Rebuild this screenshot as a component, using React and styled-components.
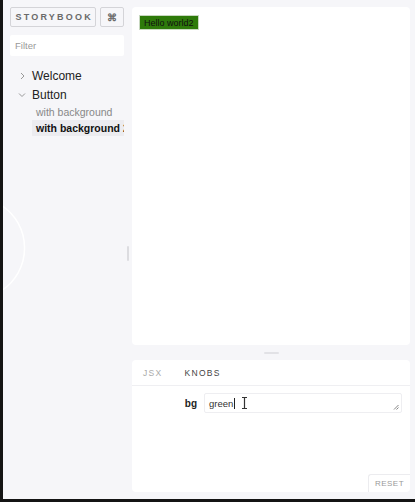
import React from 'react';
import styled, { createGlobalStyle } from 'styled-components';

const Global = createGlobalStyle`
  html, body {
    margin: 0;
    padding: 0;
    background: #111;
  }
  * { box-sizing: border-box; }
`;

// Whole window
const Page = styled.div`
  position: relative;
  width: 415px;
  height: 502px;
  display: flex;
  background: #f6f6f9;
  border-left: 3px solid #141414;
  border-bottom: 3px solid #141414;
  font-family: "Liberation Sans", Arial, sans-serif;
  overflow: hidden;
`;

const Sidebar = styled.div`
  width: 121px;
  flex-shrink: 0;
  padding: 7px 0 0 7px;
  display: flex;
  flex-direction: column;
  overflow: hidden;
`;

const Header = styled.div`
  display: flex;
  gap: 4px;
  height: 20px;
`;

const HeadButton = styled.div`
  height: 20px;
  width: ${p => p.w}px;
  border: 1px solid #d4d4d8;
  border-radius: 2px;
  display: flex;
  align-items: center;
  justify-content: center;
  color: #6a6a6a;
  font-weight: bold;
  font-size: ${p => p.fs || 9}px;
  letter-spacing: ${p => p.ls || 0}px;
  padding-left: ${p => p.ls || 0}px;
`;

const Filter = styled.div`
  margin-top: 8px;
  width: 114px;
  height: 21px;
  background: #fff;
  border-radius: 2px;
  color: #999;
  font-size: 9.5px;
  padding-left: 5px;
  display: flex;
  align-items: center;
`;

const Tree = styled.div`
  margin-top: 10px;
  display: flex;
  flex-direction: column;
`;

const Kind = styled.div`
  display: flex;
  align-items: center;
  height: 19px;
  color: #222;
  font-size: 12px;
`;

const Chevron = styled.svg`
  width: 22px;
  flex-shrink: 0;
`;

const Story = styled.div`
  height: 16px;
  margin-left: 22px;
  padding-left: 4px;
  display: flex;
  align-items: center;
  white-space: nowrap;
  font-size: 10.5px;
  color: ${p => (p.active ? '#111' : '#888')};
  font-weight: ${p => (p.active ? 'bold' : 'normal')};
  background: ${p => (p.active ? '#ececf0' : 'transparent')};
`;

const VResizer = styled.div`
  width: 8px;
  flex-shrink: 0;
  display: flex;
  align-items: center;
  justify-content: center;
  &::after {
    content: '';
    width: 2px;
    height: 15px;
    margin-top: 8px;
    background: #dcdce0;
    border-radius: 1px;
  }
`;

const Main = styled.div`
  flex: 1;
  padding: 7px 5px 7px 0;
  display: flex;
  flex-direction: column;
`;

const Preview = styled.div`
  height: 338px;
  background: #fff;
  border-radius: 4px;
  padding: 8px 7px;
`;

const HelloButton = styled.div`
  display: flex;
  width: fit-content;
  align-items: center;
  height: 15px;
  padding: 0 4px;
  background: #2e7a0a;
  border: 1px solid #c8d8c0;
  color: #111;
  font-size: 9px;
`;

const HResizer = styled.div`
  height: 15px;
  display: flex;
  align-items: center;
  justify-content: center;
  &::after {
    content: '';
    width: 15px;
    height: 2px;
    background: #e2e2e6;
    border-radius: 1px;
  }
`;

const Addons = styled.div`
  flex: 1;
  position: relative;
  background: #fff;
  border-radius: 4px;
  display: flex;
  flex-direction: column;
`;

const Tabs = styled.div`
  height: 26px;
  display: flex;
  align-items: center;
  border-bottom: 1px solid #efeff2;
  padding-left: 11px;
  gap: 22px;
`;

const Tab = styled.div`
  font-size: 8.5px;
  letter-spacing: 1.3px;
  color: ${p => (p.active ? '#444' : '#aaa')};
`;

const KnobRow = styled.div`
  margin-top: 7px;
  display: flex;
  align-items: center;
  padding-left: 52px;
  padding-right: 8px;
  gap: 7px;
`;

const KnobLabel = styled.div`
  width: 13px;
  text-align: right;
  font-weight: bold;
  font-size: 10px;
  color: #222;
`;

const TextArea = styled.div`
  position: relative;
  flex: 1;
  height: 20px;
  border: 1px solid #eeeef1;
  border-radius: 2px;
  display: flex;
  align-items: center;
  padding-left: 4px;
  font-size: 9.5px;
  color: #333;
`;

const Caret = styled.span`
  width: 1px;
  height: 11px;
  background: #222;
  margin-left: 1px;
`;

const IBeam = styled.svg`
  margin-left: 6px;
`;

const Grip = styled.svg`
  position: absolute;
  right: 2px;
  bottom: 2px;
`;

const Reset = styled.div`
  position: absolute;
  right: 0;
  bottom: 0;
  width: 42px;
  height: 18px;
  border-top: 1px solid #ececef;
  border-left: 1px solid #ececef;
  border-top-left-radius: 3px;
  display: flex;
  align-items: center;
  justify-content: center;
  color: #999;
  font-size: 8px;
  letter-spacing: 0.5px;
`;

const Arc = styled.svg`
  position: absolute;
  left: 0;
  top: 200px;
  pointer-events: none;
`;

export default function App() {
  return (
    <>
      <Global />
      <Page>
        <Sidebar>
          <Header>
            <HeadButton w={87} ls={2.2}>STORYBOOK</HeadButton>
            <HeadButton w={24} fs={10}>⌘</HeadButton>
          </Header>
          <Filter>Filter</Filter>
          <Tree>
            <Kind>
              <Chevron height="10" viewBox="0 0 22 10">
                <path d="M11 2 L14 5 L11 8" fill="none" stroke="#999" strokeWidth="1" />
              </Chevron>
              Welcome
            </Kind>
            <Kind>
              <Chevron height="10" viewBox="0 0 22 10">
                <path d="M9 3.5 L12 6.5 L15 3.5" fill="none" stroke="#999" strokeWidth="1" />
              </Chevron>
              Button
            </Kind>
            <Story>with background</Story>
            <Story active>with background 2</Story>
          </Tree>
        </Sidebar>
        <VResizer />
        <Main>
          <Preview>
            <HelloButton>Hello world2</HelloButton>
          </Preview>
          <HResizer />
          <Addons>
            <Tabs>
              <Tab>JSX</Tab>
              <Tab active>KNOBS</Tab>
            </Tabs>
            <KnobRow>
              <KnobLabel>bg</KnobLabel>
              <TextArea>
                green
                <Caret />
                <IBeam width="7" height="12" viewBox="0 0 7 12">
                  <path d="M1 0.5 H6 M3.5 0.5 V11.5 M1 11.5 H6" fill="none" stroke="#333" strokeWidth="1.2" />
                </IBeam>
                <Grip width="6" height="6" viewBox="0 0 6 6">
                  <path d="M1 5.5 L5.5 1 M3.5 5.5 L5.5 3.5" stroke="#777" strokeWidth="0.9" />
                </Grip>
              </TextArea>
            </KnobRow>
            <Reset>RESET</Reset>
          </Addons>
        </Main>
        <Arc width="26" height="100" viewBox="0 0 26 100">
          <path d="M-0.5 6 A51 51 0 0 1 -0.5 90" fill="none" stroke="#fff" strokeWidth="1.5" />
        </Arc>
      </Page>
    </>
  );
}
